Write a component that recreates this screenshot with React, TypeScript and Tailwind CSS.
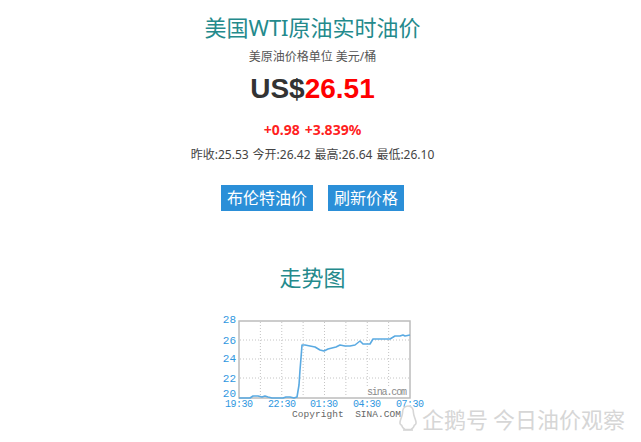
import React from 'react'

// price trend, in chart-local coordinates
const linePoints: [number, number][] = [
  [29, 86], [40, 86], [43, 84], [48, 84], [52, 85], [55, 84], [58, 85], [62, 86],
  [73, 86], [76, 85], [80, 85], [84, 86], [87, 85], [89, 73], [90, 58], [91, 46],
  [92, 33], [95, 33], [100, 34], [105, 35], [110, 38], [114, 39], [118, 37],
  [122, 36], [126, 35], [130, 33], [135, 34], [140, 34], [145, 33], [150, 29],
  [153, 32], [160, 32], [163, 27], [170, 27], [180, 27], [185, 24], [190, 24],
  [193, 23], [195, 24], [200, 23],
]

const yLabels = [
  { v: '28', y: 11 },
  { v: '26', y: 32 },
  { v: '24', y: 50 },
  { v: '22', y: 70 },
  { v: '20', y: 85 },
]

const xLabels = [
  { t: '19:30', x: 29 },
  { t: '22:30', x: 72 },
  { t: '01:30', x: 114 },
  { t: '04:30', x: 157 },
  { t: '07:30', x: 200 },
]

function TrendChart(): React.ReactElement {
  const gridX = [1, 2, 3, 4, 5, 6, 7].map((k) => 29 + k * 21.375)
  const gridY = [28, 47, 66]
  return (
    <svg width="230" height="110" viewBox="0 0 230 110" className="block">
      <rect x="29" y="9" width="171" height="77" fill="#fff" stroke="#bcbcbc" strokeWidth="1.5" />
      {gridX.map((x, i) => (
        <line key={i} x1={x} y1="10" x2={x} y2="85" stroke="#c4c4c4" strokeWidth="1" strokeDasharray="1 2" />
      ))}
      {gridY.map((y, i) => (
        <line key={i} x1="30" y1={y} x2="199" y2={y} stroke="#c4c4c4" strokeWidth="1" strokeDasharray="1 2" />
      ))}
      <rect x="156" y="74" width="43" height="11" fill="#fff" />
      <text x="197" y="83" textAnchor="end" fontFamily="'Liberation Mono', monospace" fontSize="10" fill="#8a8a8a" textLength="40">
        sina.com
      </text>
      <polyline
        points={linePoints.map((p) => p.join(',')).join(' ')}
        fill="none"
        stroke="#5aaae2"
        strokeWidth="1.6"
        strokeLinejoin="round"
      />
      {yLabels.map((l) => (
        <text key={l.v} x="26" y={l.y} textAnchor="end" fontFamily="'Liberation Mono', monospace" fontSize="11" fill="#2f97e0">
          {l.v}
        </text>
      ))}
      {xLabels.map((l) => (
        <text key={l.t} x={l.x} y="95" textAnchor="middle" fontFamily="'Liberation Mono', monospace" fontSize="10" fill="#2f97e0" textLength="28">
          {l.t}
        </text>
      ))}
      <text x="82" y="105" fontFamily="'Liberation Mono', monospace" fontSize="9.5" fill="#666" textLength="109" xmlSpace="preserve">
        Copyright  SINA.COM
      </text>
    </svg>
  )
}

function Penguin(): React.ReactElement {
  return (
    <svg width="18" height="28" viewBox="0 0 18 28" fill="none" stroke="#d6d6d6" strokeWidth="1.6" strokeLinejoin="round">
      <path d="M9 2 C4.5 2 3.5 6 3.5 9 C3.5 11 2.5 13 1.5 16 C0.5 19 1 21 2.5 21 C3 23 4 24.5 6 25.5 L12 25.5 C14 24.5 15 23 15.5 21 C17 21 17.5 19 16.5 16 C15.5 13 14.5 11 14.5 9 C14.5 6 13.5 2 9 2 Z" />
      <path d="M4 26 L14 26" />
    </svg>
  )
}

export default function App(): React.ReactElement {
  return (
    <div
      className="relative w-[641px] h-[442px] overflow-hidden bg-white"
      style={{ fontFamily: "'Noto Sans', 'Noto Sans CJK SC', sans-serif" }}
    >
      <div className="w-[625px] flex flex-col items-center">
        <h1 className="mt-[12px] text-[22px] leading-[30px] text-[#248a8c] font-normal">美国WTI原油实时油价</h1>
        <p className="mt-[6px] text-[12px] leading-[18px] text-[#555]">美原油价格单位 美元/桶</p>
        <div className="mt-[6px] text-[28px] leading-[34px] font-bold" style={{ fontFamily: "'Liberation Sans', sans-serif" }}>
          <span className="text-[#333]">US$</span>
          <span className="text-[#ff0000]">26.51</span>
        </div>
        <div className="mt-[14px] text-[14px] leading-[20px] font-bold text-[#ff1f1f] flex gap-[5px]">
          <span>+0.98</span>
          <span>+3.839%</span>
        </div>
        <div className="mt-[6px] text-[12px] leading-[18px] text-[#444] flex gap-[4px]">
          <span>昨收:25.53</span>
          <span>今开:26.42</span>
          <span>最高:26.64</span>
          <span>最低:26.10</span>
        </div>
        <div className="mt-[21px] flex gap-[15px]">
          <button className="h-[26px] px-[6px] bg-[#2b8fd8] text-white text-[16px] leading-[26px]">布伦特油价</button>
          <button className="h-[26px] px-[6px] bg-[#2b8fd8] text-white text-[16px] leading-[26px]">刷新价格</button>
        </div>
        <h2 className="mt-[51px] text-[22px] leading-[30px] text-[#248a8c] font-normal">走势图</h2>
        <div className="mt-[20px] ml-[25px]">
          <TrendChart />
        </div>
      </div>

      {/* watermark */}
      <div className="absolute left-[399px] top-[404px] flex items-center gap-[5px]">
        <Penguin />
        <span className="text-[22px] leading-[28px] text-[#d6d6d6]" style={{ fontFamily: "'Noto Sans CJK SC', sans-serif" }}>
          企鹅号 今日油价观察
        </span>
      </div>
    </div>
  )
}
